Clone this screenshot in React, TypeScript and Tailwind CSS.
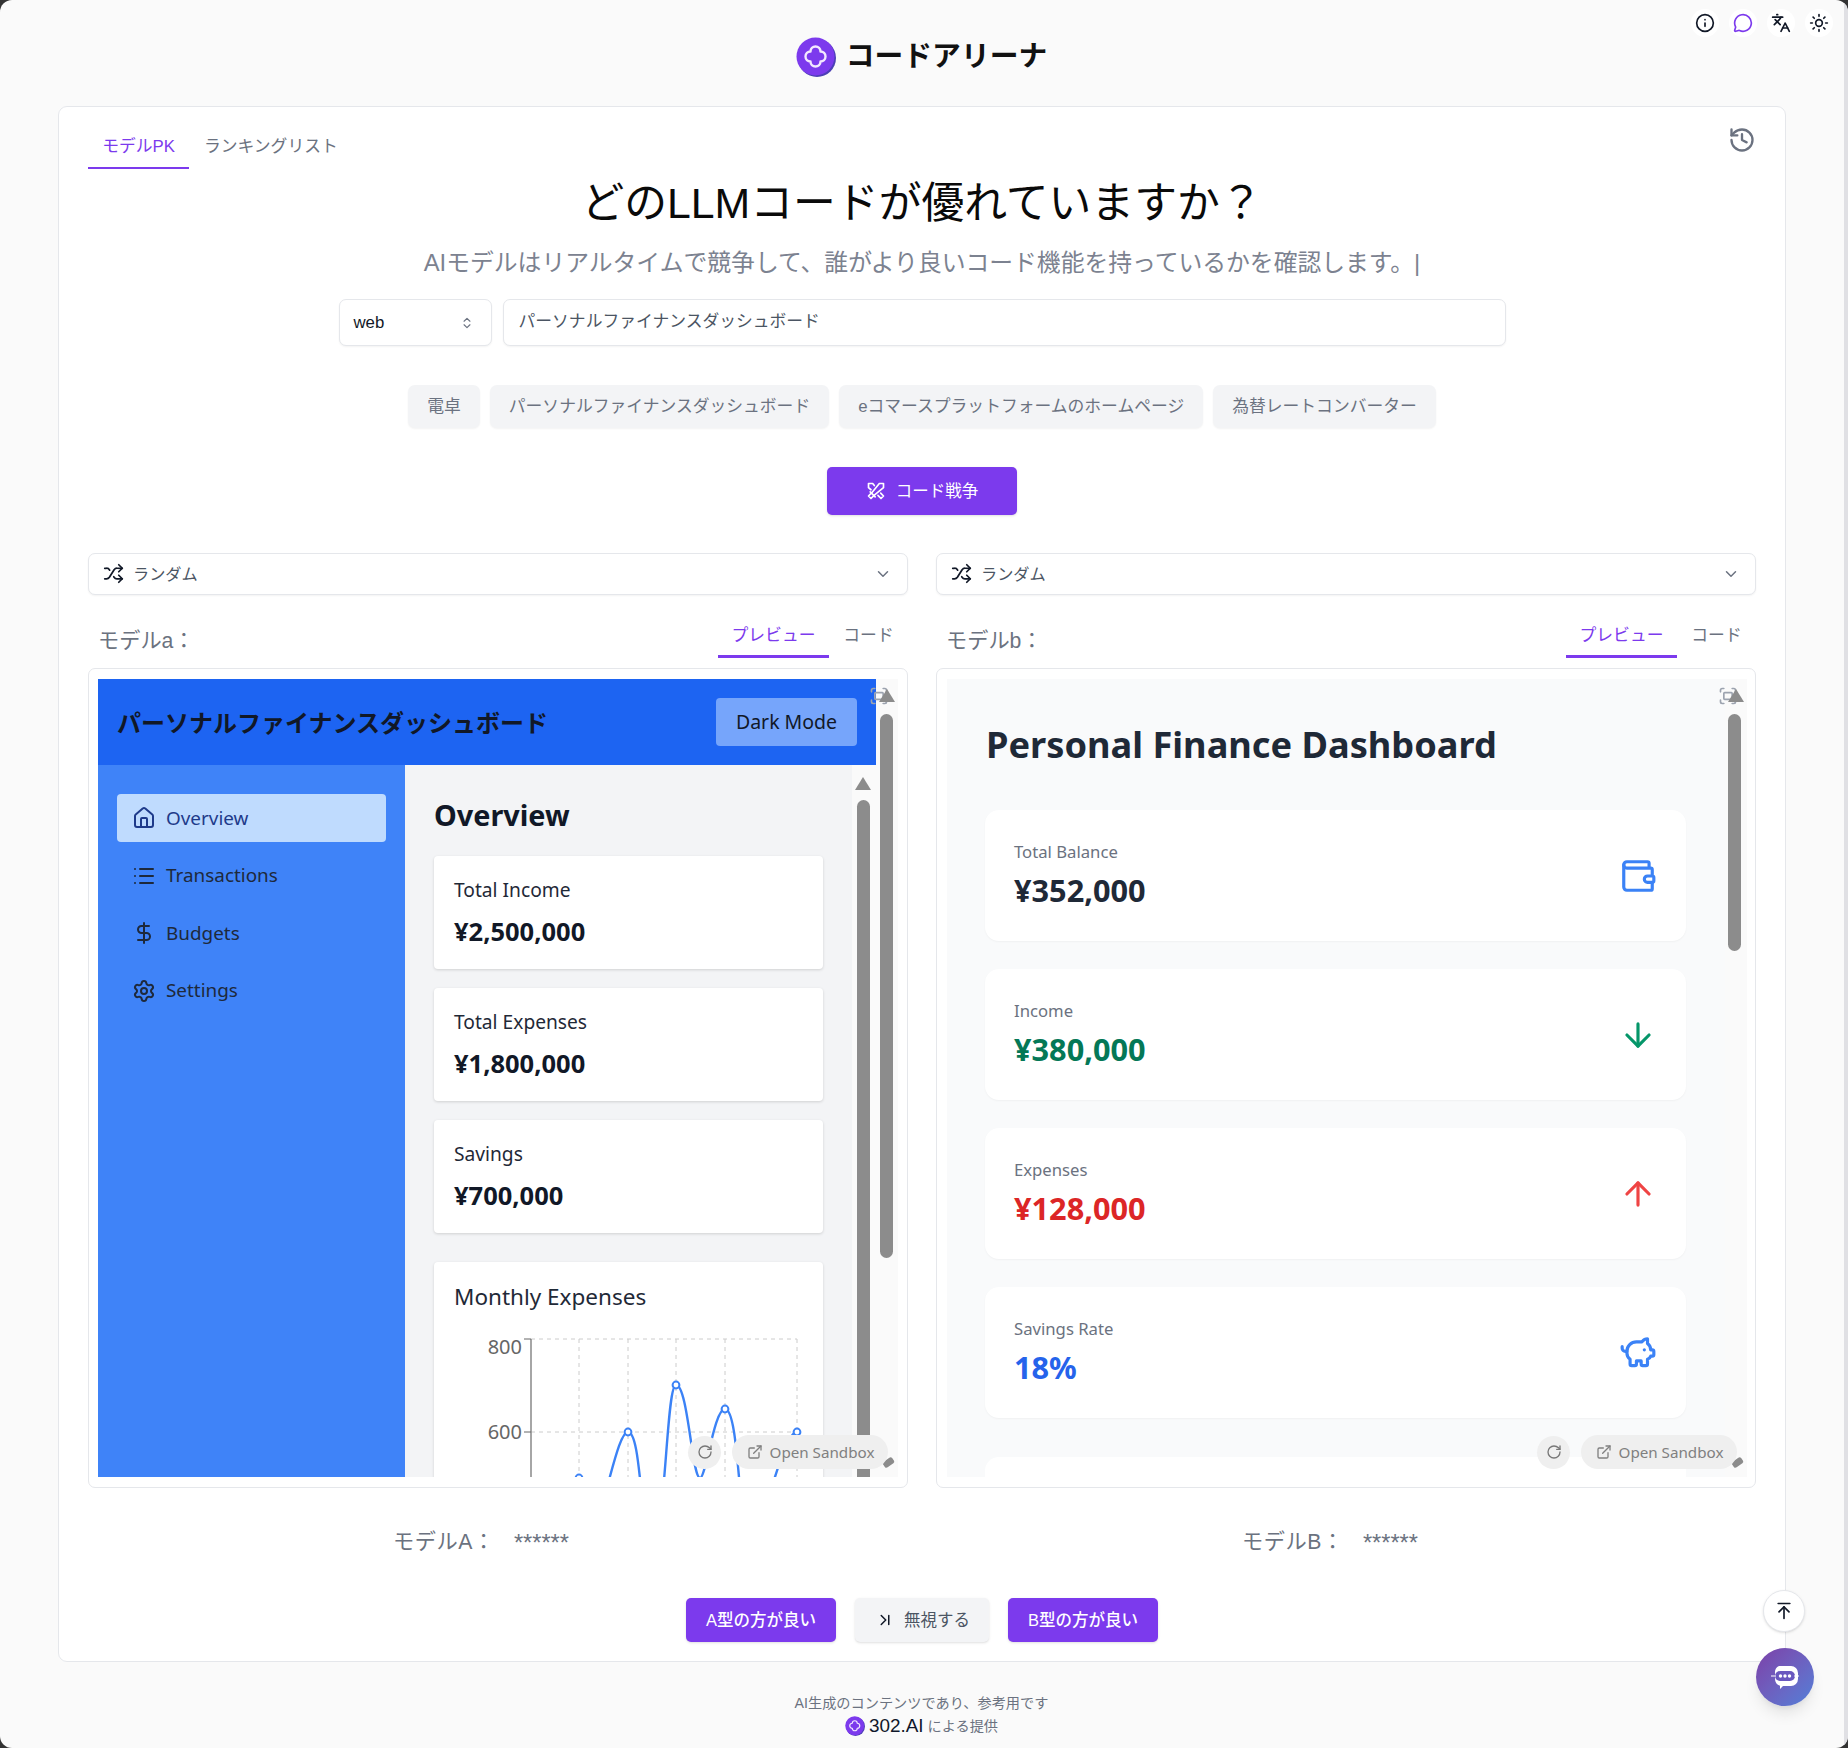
import React from 'react';
import {
  ArrowDown,
  ArrowUp,
  ArrowUpToLine,
  ChevronDown,
  ChevronLast,
  ChevronsUpDown,
  DollarSign,
  ExternalLink,
  Fullscreen,
  History,
  Home,
  Info,
  Languages,
  List,
  MessageCircle,
  PiggyBank,
  RotateCw,
  Settings,
  Shuffle,
  Sun,
  Wallet,
} from 'lucide-react';
import { TbSwords } from 'react-icons/tb';

const Logo = ({ size }: { size: number }) => (
  <svg width={size} height={size} viewBox="0 0 40 40" className="shrink-0">
    <circle cx="21" cy="21" r="19" fill="#4c3fb5" />
    <circle cx="19.5" cy="19.5" r="19" fill="#7c3aed" />
    <path
      d="M14.5 14.5A5 5 0 1 1 24.5 14.5A5 5 0 1 1 24.5 24.5A5 5 0 1 1 14.5 24.5A5 5 0 1 1 14.5 14.5Z"
      fill="none"
      stroke="#f3e8ff"
      strokeWidth="2.4"
      strokeLinejoin="round"
    />
  </svg>
);

const ArrowCap = ({ className }: { className: string }) => (
  <div className={`absolute w-0 h-0 border-l-[8px] border-r-[8px] border-b-[13px] border-l-transparent border-r-transparent border-b-[#8c8c8c] ${className}`} />
);

const ModelSelect = () => (
  <div className="h-[42px] rounded-[7px] border border-[#e5e7eb] bg-white shadow-[0_1px_2px_rgba(0,0,0,0.05)] flex items-center justify-between pl-[14px] pr-[15px]">
    <div className="flex items-center gap-[9px] text-[16.2px] text-[#4b5563]">
      <Shuffle size={21} className="text-[#111827]" />
      <span>ランダム</span>
    </div>
    <ChevronDown size={18} className="text-[#6b7280]" />
  </div>
);

const ModelHeader = ({ label }: { label: string }) => (
  <div className="h-[73px] flex justify-between">
    <div className="pl-[10px] pt-[32px] text-[21.2px] leading-[28px] text-[#6b7280]">{label}</div>
    <div className="flex h-[63px] items-end text-[16.8px]">
      <div className="w-[111px] h-[44px] border-b-[3px] border-[#7c3aed] text-[#7c3aed] text-center leading-[26px] pt-[9px]">プレビュー</div>
      <div className="w-[79px] h-[44px] text-[#6b7280] text-center leading-[26px] pt-[9px]">コード</div>
    </div>
  </div>
);

const SandboxButtons = () => (
  <div className="absolute bottom-[8px] right-[10px] flex items-center gap-[11px]">
    <div className="w-[33px] h-[33px] rounded-full bg-[#efefef] flex items-center justify-center">
      <RotateCw size={16} className="text-[#777777]" />
    </div>
    <div className="h-[34px] w-[156px] rounded-full bg-[#efefef] flex items-center justify-center gap-[7px] pl-[1px] text-[15.2px] text-[#808080]">
      <ExternalLink size={16} />
      <span>Open Sandbox</span>
    </div>
  </div>
);

const ScrollOverlay = () => (
  <>
    <Fullscreen size={20} className="absolute top-[7px] right-[9px] text-[#9ca3af]" />
    <ArrowCap className="top-[10px] right-[3px]" />
    <div className="absolute bottom-[11px] right-[4px] w-[11px] h-[7px] rounded-[2px] bg-[#8c8c8c] -rotate-[35deg]" />
  </>
);

const NavItem = ({ icon, label, active }: { icon: React.ReactNode; label: string; active?: boolean }) => (
  <div className={`h-[48px] rounded-[4px] flex items-center gap-[10px] pl-[15px] text-[18.9px] text-[#1e293b] ${active ? 'bg-[#bfdbfe] !text-[#1e3a8a]' : ''}`}>
    {icon}
    <span>{label}</span>
  </div>
);

const StatA = ({ label, value }: { label: string; value: string }) => (
  <div className="h-[113px] rounded-[4px] bg-white shadow-[0_1px_3px_rgba(0,0,0,0.15)] px-[20px] pt-[20px]">
    <div className="text-[19.2px] leading-[28px] text-[#1f2937]">{label}</div>
    <div className="mt-[8px] text-[25.5px] leading-[38px] font-bold text-[#111827]">{value}</div>
  </div>
);

const StatB = ({ label, value, color, icon }: { label: string; value: string; color: string; icon: React.ReactNode }) => (
  <div className="h-[131px] shrink-0 rounded-[14px] bg-white shadow-[0_1px_2px_rgba(0,0,0,0.04)] pl-[29px] pr-[29px] flex items-center justify-between">
    <div className="self-start pt-[30px]">
      <div className="text-[16.7px] leading-[24px] text-[#6b7280]">{label}</div>
      <div className={`mt-[5px] text-[30.7px] leading-[42px] font-bold ${color}`}>{value}</div>
    </div>
    {icon}
  </div>
);

const ExpenseChart = () => (
  <svg width="389" height="216" viewBox="0 0 389 216" className="block overflow-visible">
    <g stroke="#cccccc" strokeDasharray="4 4" fill="none">
      <path d="M97 0H363M97 93H363M97 186H363" />
      <path d="M145 0V216M194 0V216M242 0V216M291 0V216M363 0V216" />
    </g>
    <path d="M97 0V216" stroke="#888888" strokeWidth="1.5" />
    <path d="M90 0H97M90 93H97" stroke="#666666" />
    <text x="88" y="15" textAnchor="end" fontSize="20" fill="#666666">800</text>
    <text x="88" y="100" textAnchor="end" fontSize="20" fill="#666666">600</text>
    <path
      d="M145 139C160 260 178 93 194 93C208 93 206 200 218 200C232 200 232 46 242 46C254 46 258 139 266 139C272 139 280 70 291 70C302 70 304 139 310 190C318 250 345 93 363 93"
      fill="none"
      stroke="#3b82f6"
      strokeWidth="2.4"
    />
    {[
      [145, 139],
      [194, 93],
      [242, 46],
      [291, 70],
      [363, 93],
    ].map(([cx, cy]) => (
      <circle key={cx} cx={cx} cy={cy} r="3.4" fill="#ffffff" stroke="#3b82f6" strokeWidth="2" />
    ))}
  </svg>
);

const PreviewA = () => (
  <div className="relative h-[798px] overflow-hidden flex bg-[#fafafa] font-['Noto_Sans','Noto_Sans_CJK_JP',sans-serif]">
    <div className="w-[778px] flex flex-col bg-[#f3f4f6]">
      <div className="h-[86px] shrink-0 bg-[#1d64f2] flex items-center justify-between pl-[19px] pr-[19px]">
        <div className="mt-[2px] text-[24px] font-bold text-[#111827]">パーソナルファイナンスダッシュボード</div>
        <div className="w-[141px] h-[48px] rounded-[4px] bg-[#76a5fb] flex items-center justify-center text-[19.5px] text-[#111827]">Dark Mode</div>
      </div>
      <div className="flex flex-1 min-h-0">
        <div className="w-[307px] bg-[#3f83f8] px-[19px] pt-[29px] flex flex-col gap-[9.5px]">
          <NavItem active icon={<Home size={24} className="text-[#1e3a8a]" />} label="Overview" />
          <NavItem icon={<List size={24} className="text-[#1e293b]" />} label="Transactions" />
          <NavItem icon={<DollarSign size={24} className="text-[#1e293b]" />} label="Budgets" />
          <NavItem icon={<Settings size={24} className="text-[#1e293b]" />} label="Settings" />
        </div>
        <div className="flex-1 flex min-w-0">
          <div className="w-[447px] px-[29px] pt-[30px] overflow-hidden">
            <div className="text-[28.8px] leading-[38px] font-bold text-[#111827] mt-[1px]">Overview</div>
            <div className="mt-[22px] flex flex-col gap-[19px]">
              <StatA label="Total Income" value="¥2,500,000" />
              <StatA label="Total Expenses" value="¥1,800,000" />
              <StatA label="Savings" value="¥700,000" />
            </div>
            <div className="mt-[29px] h-[300px] rounded-[4px] bg-white shadow-[0_1px_3px_rgba(0,0,0,0.15)] pt-[18px]">
              <div className="pl-[20px] text-[22.5px] leading-[34px] text-[#1f2937]">Monthly Expenses</div>
              <div className="mt-[25px]">
                <ExpenseChart />
              </div>
            </div>
          </div>
          <div className="relative flex-1 bg-[#fafafa]">
            <ArrowCap className="top-[12px] left-[3px]" />
            <div className="absolute top-[35px] bottom-0 left-[5px] w-[13px] rounded-t-full bg-[#8c8c8c]" />
          </div>
        </div>
      </div>
    </div>
    <div className="relative flex-1">
      <div className="absolute top-[35px] left-[4px] w-[13px] h-[544px] rounded-full bg-[#8c8c8c]" />
    </div>
    <ScrollOverlay />
    <SandboxButtons />
  </div>
);

const PreviewB = () => (
  <div className="relative h-[798px] overflow-hidden flex bg-[#fafafa] font-['Noto_Sans','Noto_Sans_CJK_JP',sans-serif]">
    <div className="w-[778px] bg-[#f9fafb] pl-[38px] pr-[39px]">
      <div className="pl-[1px] pt-[38px] text-[36.2px] leading-[54px] font-bold text-[#1f2937]">Personal Finance Dashboard</div>
      <div className="mt-[39px] flex flex-col gap-[28px]">
        <StatB label="Total Balance" value="¥352,000" color="text-[#1f2937]" icon={<Wallet size={38} className="text-[#3b82f6]" />} />
        <StatB label="Income" value="¥380,000" color="text-[#047857]" icon={<ArrowDown size={38} className="text-[#059669]" />} />
        <StatB label="Expenses" value="¥128,000" color="text-[#dc2626]" icon={<ArrowUp size={38} className="text-[#ef4444]" />} />
        <StatB label="Savings Rate" value="18%" color="text-[#2563eb]" icon={<PiggyBank size={38} className="text-[#3b82f6]" />} />
        <div className="mt-[11px] h-[131px] shrink-0 rounded-[14px] bg-white" />
      </div>
    </div>
    <div className="relative flex-1">
      <div className="absolute top-[35px] left-[3px] w-[13px] h-[237px] rounded-full bg-[#8c8c8c]" />
    </div>
    <ScrollOverlay />
    <SandboxButtons />
  </div>
);

const ModelColumn = ({ label, preview, inset }: { label: string; preview: React.ReactNode; inset: string }) => (
  <div className="min-w-0">
    <ModelSelect />
    <ModelHeader label={label} />
    <div className={`rounded-[7px] border border-[#e5e7eb] py-[10px] bg-white ${inset}`}>{preview}</div>
  </div>
);

const Chip = ({ label }: { label: string }) => (
  <div className="h-[43px] px-[19px] rounded-[7px] bg-[#f3f4f6] shadow-[0_1px_2px_rgba(0,0,0,0.05)] flex items-center text-[16.8px] text-[#6b7280]">{label}</div>
);

export default function App() {
  return (
    <div className="w-full h-[1748px] bg-[#333333]">
      <div className="relative h-full overflow-hidden rounded-[12px] bg-[#fafafa] font-['Liberation_Sans','Noto_Sans_CJK_JP',sans-serif]">
        <div className="absolute top-[9px] right-[15px] flex items-center gap-[10px] text-[#111827]">
          <div className="w-[28px] h-[28px] rounded-full bg-white flex items-center justify-center"><Info size={20} /></div>
          <div className="w-[28px] h-[28px] rounded-full bg-white flex items-center justify-center"><MessageCircle size={20} className="text-[#7c3aed]" /></div>
          <div className="w-[28px] h-[28px] rounded-full bg-white flex items-center justify-center"><Languages size={20} /></div>
          <div className="w-[28px] h-[28px] rounded-full bg-white flex items-center justify-center"><Sun size={20} /></div>
        </div>

        <header className="h-[106px] pt-[8px] pr-[5px] flex items-center justify-center gap-[10px]">
          <Logo size={40} />
          <h1 className="text-[28.8px] font-bold text-[#111111]">コードアリーナ</h1>
        </header>

        <main className="ml-[58px] w-[1728px] h-[1556px] rounded-[9px] border border-[#e5e7eb] bg-white px-[29px]">
          <div className="h-[62px] flex justify-between">
            <div className="flex items-end h-[62px] text-[16.8px]">
              <div className="w-[101px] h-[44px] border-b-[2.5px] border-[#7c3aed] text-[#7c3aed] text-center leading-[44px]">モデルPK</div>
              <div className="px-[15px] h-[44px] text-[#6b7280] leading-[44px]">ランキングリスト</div>
            </div>
            <History size={28} className="mt-[19px] text-[#6b7280]" />
          </div>

          <h2 className="h-[64px] pt-[4px] flex items-center justify-center text-[42.8px] text-[#0a0a0a]">どのLLMコードが優れていますか？</h2>
          <p className="h-[58px] pt-[2px] flex items-center justify-center text-[23.8px] text-[#7c8290] whitespace-pre">AIモデルはリアルタイムで競争して、誰がより良いコード機能を持っているかを確認します。|</p>

          <div className="mt-[8px] flex justify-center gap-[11px]">
            <div className="w-[153px] h-[47px] rounded-[7px] border border-[#e5e7eb] bg-white shadow-[0_1px_2px_rgba(0,0,0,0.05)] flex items-center justify-between pl-[14px] pr-[17px] text-[16.8px] text-[#111827]">
              <span>web</span>
              <ChevronsUpDown size={14} className="text-[#6b7280]" />
            </div>
            <div className="w-[1003px] h-[47px] rounded-[7px] border border-[#e5e7eb] bg-white shadow-[0_1px_2px_rgba(0,0,0,0.05)] flex items-center pl-[15px] pb-[2px] text-[16.8px] text-[#4b5563]">パーソナルファイナンスダッシュボード</div>
          </div>

          <div className="mt-[39px] flex justify-center gap-[10px]">
            <Chip label="電卓" />
            <Chip label="パーソナルファイナンスダッシュボード" />
            <Chip label="eコマースプラットフォームのホームページ" />
            <Chip label="為替レートコンバーター" />
          </div>

          <div className="mt-[39px] flex justify-center">
            <div className="w-[190px] h-[48px] rounded-[5px] bg-[#7c3aed] shadow-sm flex items-center justify-center gap-[10px] text-[16.5px] text-white">
              <TbSwords size={20} />
              <span>コード戦争</span>
            </div>
          </div>

          <div className="mt-[38px] grid grid-cols-2 gap-[28px]">
            <ModelColumn label="モデルa：" preview={<PreviewA />} inset="pl-[9px] pr-[9px]" />
            <ModelColumn label="モデルb：" preview={<PreviewB />} inset="pl-[10px] pr-[8px]" />
          </div>

          <div className="grid grid-cols-2 gap-[28px] h-[110px] text-[#6b7280]">
            <div className="pl-[305px] pt-[37px] flex items-center h-[70px] gap-[19px]">
              <span className="text-[21.2px] tracking-[0.6px]">モデルA：</span>
              <span className="text-[23.6px] leading-none pt-[4px]">******</span>
            </div>
            <div className="pl-[306px] pt-[37px] flex items-center h-[70px] gap-[19px]">
              <span className="text-[21.2px] tracking-[0.6px]">モデルB：</span>
              <span className="text-[23.6px] leading-none pt-[4px]">******</span>
            </div>
          </div>

          <div className="flex justify-center gap-[19px] text-[16.5px]">
            <div className="w-[150px] h-[44px] rounded-[5px] bg-[#7c3aed] shadow-sm flex items-center justify-center font-medium text-white">A型の方が良い</div>
            <div className="w-[134px] h-[44px] rounded-[5px] bg-[#f3f4f6] shadow-sm flex items-center justify-center gap-[10px] pl-[2px] text-[#4b5563]">
              <ChevronLast size={18} className="text-[#111827]" />
              <span>無視する</span>
            </div>
            <div className="w-[150px] h-[44px] rounded-[5px] bg-[#7c3aed] shadow-sm flex items-center justify-center font-medium text-white">B型の方が良い</div>
          </div>
        </main>

        <footer className="mt-[30px] flex flex-col items-center text-[14.2px] text-[#6b7280] pr-[5px]">
          <div className="leading-[22px]">AI生成のコンテンツであり、参考用です</div>
          <div className="flex items-center gap-[4px] leading-[24px]">
            <Logo size={20} />
            <span className="text-[18.9px] text-[#0f172a]">302.AI</span>
            <span>による提供</span>
          </div>
        </footer>

        <div className="absolute left-[1763px] top-[1590px] w-[42px] h-[42px] rounded-full bg-white border border-[#e5e7eb] shadow-sm flex items-center justify-center">
          <ArrowUpToLine size={20} className="text-[#111827]" />
        </div>
        <div className="absolute left-[1756px] top-[1648px] w-[58px] h-[58px] rounded-full bg-gradient-to-br from-[#7b3fa8] to-[#4f7fd8] shadow-lg flex items-center justify-center">
          <svg width="30" height="30" viewBox="0 0 30 30">
            <path d="M9 4h12a7 7 0 0 1 7 7v6a7 7 0 0 1-7 7h-8l-3 3v-3.300a7 7 0 0 1-5-6.700v-6a7 7 0 0 1 4-7z" fill="#ffffff" />
            <rect x="5" y="9" width="20" height="10" rx="5" fill="#6a58bf" />
            <path d="M1 14h5M24 14h5" stroke="#ffffff" strokeWidth="1.200" />
            <circle cx="10.500" cy="14" r="1.700" fill="#ffffff" />
            <circle cx="15" cy="14" r="1.700" fill="#ffffff" />
            <circle cx="19.500" cy="14" r="1.700" fill="#ffffff" />
          </svg>
        </div>

        <div className="absolute top-0 bottom-0 right-0 w-[4px] bg-[#e0e0e4]" />
      </div>
    </div>
  );
}
